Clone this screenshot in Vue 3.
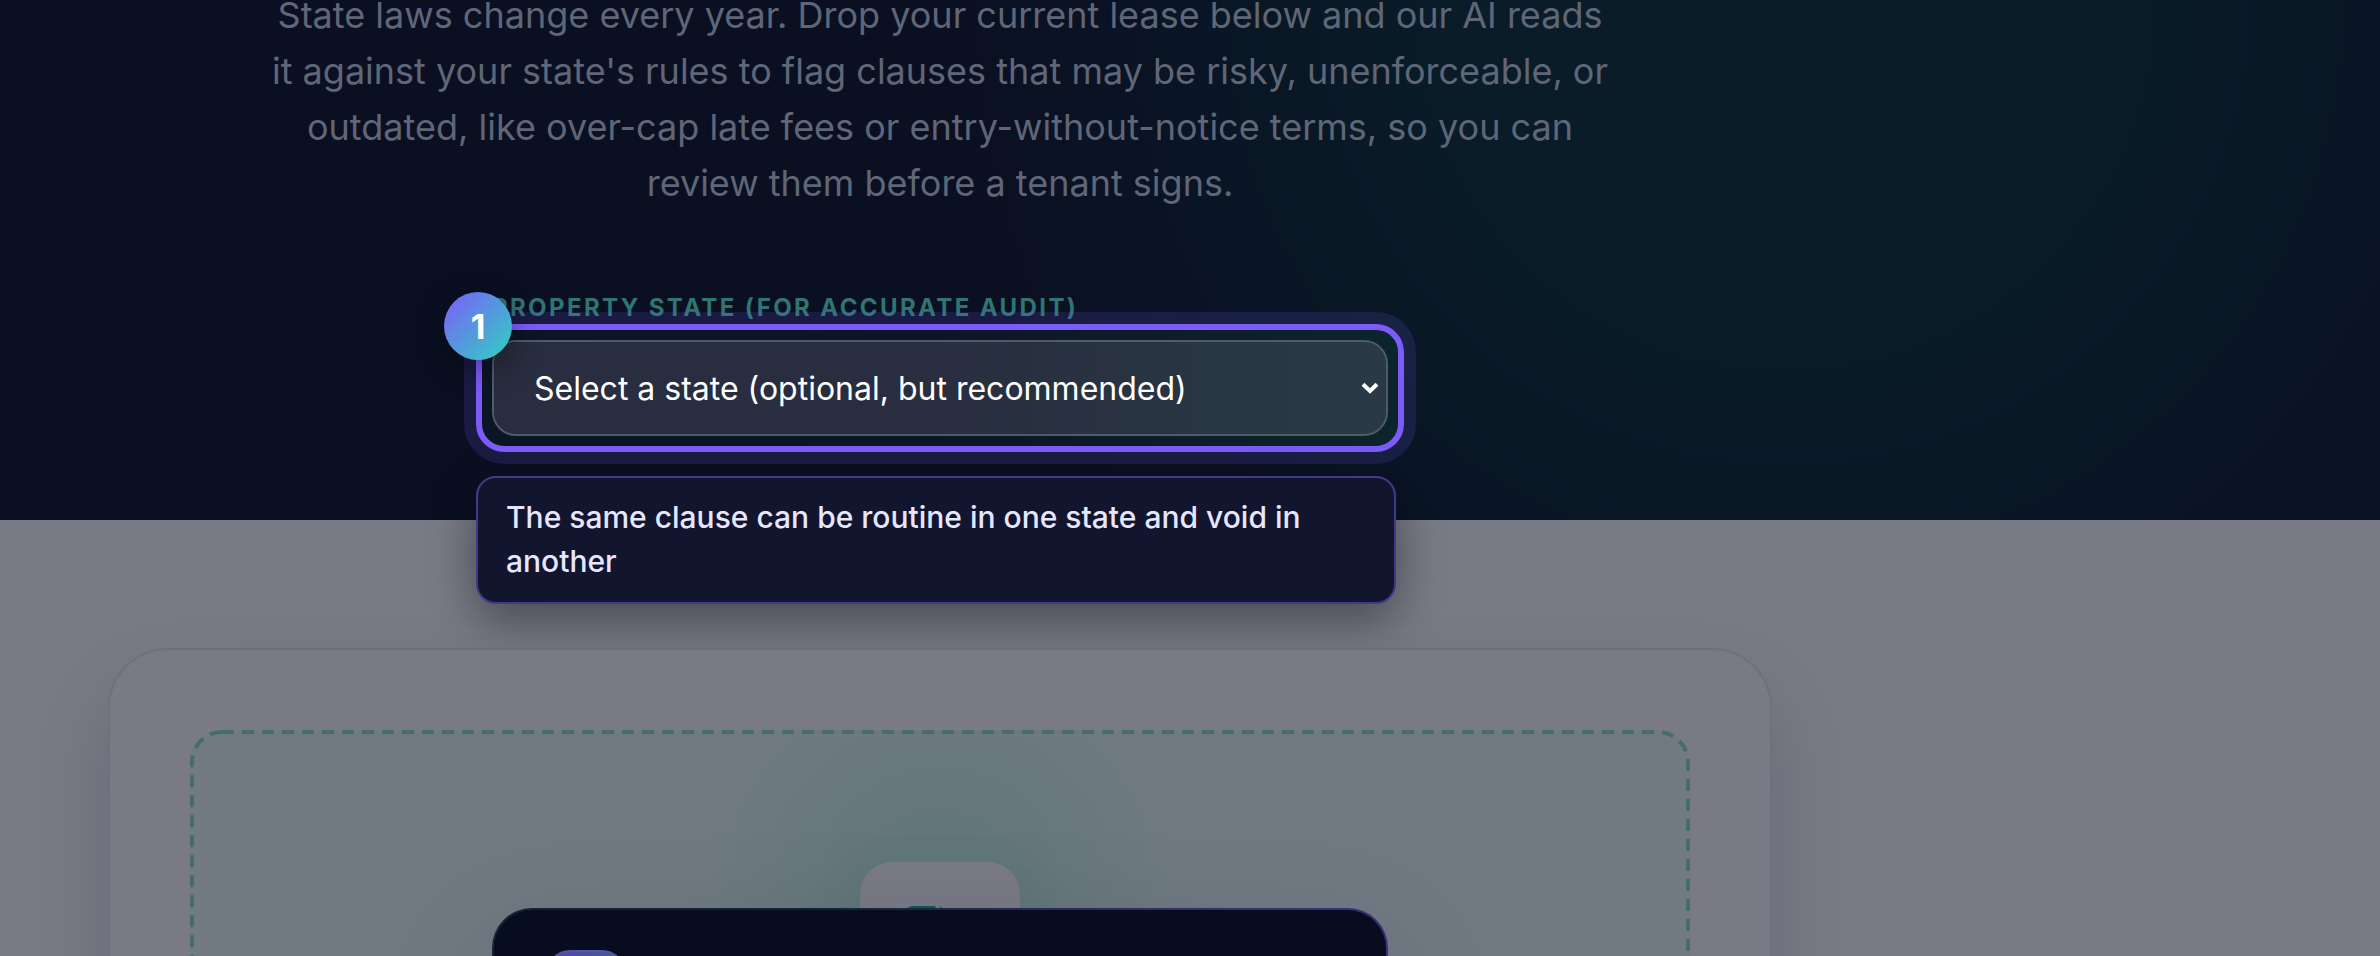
<template>
  <main class="page">
    <section class="hero">
      <div class="column">
        <p class="lead">
          State laws change every year. Drop your current lease below and our AI reads it against
          your state's rules to flag clauses that may be risky, unenforceable, or outdated, like
          over-cap late fees or entry-without-notice terms, so you can review them before a tenant
          signs.
        </p>
        <div class="field">
          <label for="property-state">Property state (for accurate audit)</label>
          <div class="control">
            <div class="spotlight"></div>
            <select id="property-state" v-model="selectedState">
              <option value="">Select a state (optional, but recommended)</option>
              <option v-for="state in states" :key="state" :value="state">{{ state }}</option>
            </select>
            <svg class="chevron" viewBox="0 0 18 12" aria-hidden="true">
              <path d="M2 2.2 9 9l7-6.8" />
            </svg>
            <span class="step">1</span>
            <div class="tip" role="tooltip">{{ tip }}</div>
          </div>
        </div>
      </div>
    </section>

    <section class="upload">
      <div class="card">
        <div class="dropzone">
          <svg class="dashes" aria-hidden="true">
            <rect x="2" y="2" rx="30" />
          </svg>
          <div class="file-tile">
            <svg viewBox="0 0 512 512" aria-hidden="true">
              <path d="M0 64C0 28.700 28.700 0 64 0h160v128c0 17.700 14.300 32 32 32h128v288c0 35.300-28.700 64-64 64H64c-35.300 0-64-28.700-64-64z" />
              <path d="M256 0v128h128z" />
            </svg>
          </div>
        </div>
        <div class="dialog" role="dialog" aria-label="Guide">
          <div class="dialog-icon"></div>
        </div>
      </div>
    </section>
  </main>
</template>

<script setup>
import { ref } from 'vue'

const selectedState = ref('')
const states = ['California', 'Florida', 'New York', 'Texas', 'Washington']
const tip = 'The same clause can be routine in one state and void in another'
</script>

<style>
body {
  margin: 0;
  background: #787a85;
}
</style>

<style scoped>
* {
  box-sizing: border-box;
}

.page {
  height: 100vh;
  overflow: hidden;
  font-family: Inter, "Liberation Sans", sans-serif;
  background: #787a85;
}

.hero {
  display: flow-root;
  padding: 0 500px 84px 0;
  background: radial-gradient(circle at 75% 0, #091d29 0, #091c28 340px, #091725 520px, #0a1224 700px, #0a1022 860px);
}

.column {
  display: flex;
  flex-direction: column;
  align-items: center;
}

.lead {
  max-width: 1344px;
  margin: -13px 0 82px;
  font-size: 36px;
  line-height: 56px;
  text-align: center;
  color: #5f6678;
}

.field {
  width: 100%;
  max-width: 896px;
}

label {
  display: block;
  margin-bottom: 17px;
  font-size: 24px;
  font-weight: 700;
  line-height: 30px;
  letter-spacing: 0.1em;
  text-transform: uppercase;
  color: #2f7571;
}

.control {
  position: relative;
}

/* highlight ring drawn around the active control */
.spotlight {
  position: absolute;
  inset: -16px;
  border: 6px solid #7b5cf8;
  border-radius: 28px;
  background: linear-gradient(90deg, #0c1526 0, #0c1627 50%, #0c252c 100%) padding-box;
  box-shadow: 0 0 0 12px rgba(124, 92, 252, 0.15);
}

select {
  position: relative;
  display: block;
  width: 100%;
  height: 96px;
  padding: 0 40px;
  border: 2px solid #525a69;
  border-radius: 24px;
  background: linear-gradient(90deg, #282d3f 0, #282e3f 50%, #293a46 100%) padding-box;
  font-family: inherit;
  font-size: 32px;
  color: #fff;
  appearance: none;
}

option {
  color: #0b1023;
}

.chevron {
  position: absolute;
  top: 42px;
  right: 9px;
  width: 18px;
  height: 12px;
  fill: none;
  stroke: #fff;
  stroke-width: 4;
  pointer-events: none;
}

.step {
  position: absolute;
  top: -48px;
  left: -48px;
  display: grid;
  place-items: center;
  width: 68px;
  height: 68px;
  border-radius: 50%;
  background: linear-gradient(135deg, #7c5cfc, #2dd4bf);
  box-shadow: 0 8px 32px rgba(0, 0, 0, 0.4);
  font-size: 34px;
  font-weight: 700;
  color: #fff;
}

.tip {
  position: absolute;
  top: 136px;
  left: -16px;
  width: 920px;
  padding: 17px 28px 19px;
  border: 2px solid #43398a;
  border-radius: 20px;
  background: #12152e;
  box-shadow: 0 16px 48px rgba(0, 0, 0, 0.4);
  font-size: 30px;
  font-weight: 500;
  line-height: 44px;
  color: #e6e6ff;
}

.upload {
  padding: 128px 608px 0 108px;
}

.card {
  position: relative;
  padding: 80px;
  border: 2px solid #6e707b;
  border-radius: 60px;
  background: #797a86;
  box-shadow: 0 40px 80px rgba(10, 15, 34, 0.14);
}

.dropzone {
  position: relative;
  display: flex;
  justify-content: center;
  min-height: 640px;
  padding-top: 132px;
  border-radius: 32px;
  background: radial-gradient(circle at 50% 170px, #62777a 0, #64777b 80px, #717a83 260px);
}

.dashes {
  position: absolute;
  inset: 0;
  width: 100%;
  height: 100%;
}

.dashes rect {
  width: calc(100% - 4px);
  height: calc(100% - 4px);
  fill: none;
  stroke: #456d6b;
  stroke-width: 4;
  stroke-dasharray: 12 8;
}

.file-tile {
  position: relative;
  display: grid;
  place-items: center;
  width: 160px;
  height: 160px;
  border-radius: 32px;
  background: #797a86;
  box-shadow: 0 16px 48px rgba(16, 110, 100, 0.15);
}

.file-tile svg {
  width: 72px;
  height: 74px;
  fill: #0f5a50;
}

.dialog {
  position: absolute;
  top: 258px;
  left: 0;
  right: 0;
  width: 896px;
  min-height: 400px;
  margin: 0 auto;
  padding: 40px 52px;
  border: 2px solid transparent;
  border-radius: 40px;
  background:
    linear-gradient(#070d1e, #070d1e) padding-box,
    linear-gradient(90deg, #122433 0, #122433 35%, #332e6b 75%, #38317a 100%) border-box;
  box-shadow: 0 40px 120px rgba(10, 15, 34, 0.15);
}

.dialog-icon {
  width: 80px;
  height: 80px;
  border: 2px solid #5a52a8;
  border-radius: 24px;
  background: linear-gradient(135deg, #5546a4, #2f6f8c);
}
</style>
